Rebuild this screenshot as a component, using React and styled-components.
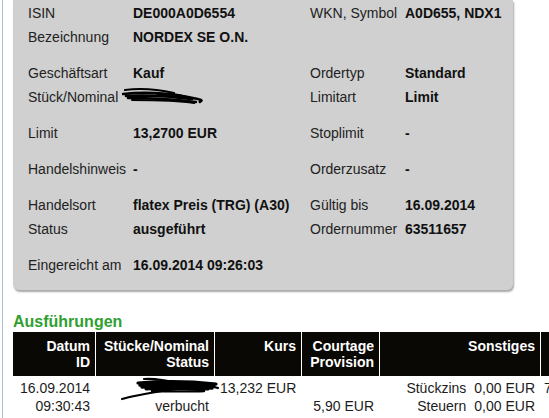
import React from 'react';
import styled, { createGlobalStyle } from 'styled-components';

const GlobalStyle = createGlobalStyle`
  html, body {
    margin: 0;
    padding: 0;
    overflow: hidden;
    background: #fff;
  }
  body {
    font-family: "Liberation Sans", Arial, sans-serif;
    font-size: 14px;
    color: #222;
  }
`;

const Page = styled.div`
  margin-left: 2px;
  border-left: 1px solid #a9c0d2;
  padding-left: 10px;
  min-height: 418px;
  width: 760px;
`;

const Panel = styled.div`
  width: 500px;
  box-sizing: border-box;
  background: #d0d0d0;
  border-radius: 0 0 6px 6px;
  box-shadow: 1px 2px 2px rgba(0, 0, 0, 0.35);
  padding: 1px 0 13px 15px;
  display: flex;
  flex-direction: column;
  gap: 12px;
`;

const Group = styled.div`
  display: flex;
  flex-direction: column;
`;

const DetailRow = styled.div`
  display: grid;
  grid-template-columns: 105px 177px 95px 1fr;
  height: 24px;
  line-height: 24px;
  white-space: nowrap;
`;

const Label = styled.div`
  color: #222;
`;

const Value = styled.div`
  position: relative;
  font-weight: bold;
  color: #111;
`;

const Heading = styled.h2`
  margin: 23px 0 1px;
  font-size: 16px;
  line-height: 18px;
  font-weight: bold;
  color: #30a030;
`;

const Table = styled.div`
  width: 740px;
`;

const TableRow = styled.div`
  display: grid;
  grid-template-columns: 83px 119px 87px 78px 161px 200px;
`;

const HeadCell = styled.div`
  background: #0a0805;
  color: #fff;
  font-weight: bold;
  font-size: 14px;
  line-height: 16px;
  padding: 6px 5px;
  text-align: right;
  border-right: 1px solid #fff;
  white-space: nowrap;
`;

const Cell = styled.div`
  position: relative;
  line-height: 18px;
  padding: 3px 5px 0 ${({ $left }) => ($left ? '3px' : '5px')};
  text-align: ${({ $left }) => ($left ? 'left' : 'right')};
  border-right: 1px solid transparent;
  color: #1c1c1c;
  white-space: nowrap;
`;

const Extras = styled.div`
  display: grid;
  grid-template-columns: auto auto;
  justify-content: end;
  column-gap: 8px;
`;

const Scribble = styled.svg`
  position: absolute;
  pointer-events: none;
`;

const NominalScribble = () => (
  <Scribble width="82" height="20" viewBox="0 0 82 20" style={{ left: -11, top: 2 }}>
    <g fill="none" stroke="#000" strokeLinecap="round">
      <path d="M3 3 C 18 1, 34 2, 52 6" strokeWidth="2.2" />
      <path d="M1 7 C 20 5, 44 6, 66 10 S 76 14, 78 15" strokeWidth="2.6" />
      <path d="M4 9 C 24 8, 46 9, 70 12" strokeWidth="2.6" />
      <path d="M6 11 C 28 11, 50 12, 74 15" strokeWidth="2.4" />
      <path d="M10 13 C 30 13, 54 13, 72 16" strokeWidth="2" />
      <path d="M36 8 C 50 7, 58 8, 66 11" strokeWidth="3" />
    </g>
  </Scribble>
);

const TableScribble = () => (
  <Scribble width="112" height="26" viewBox="0 0 112 26" style={{ left: 12, top: 0 }}>
    <g fill="none" stroke="#000" strokeLinecap="round">
      <path d="M36 3 C 46 2, 52 4, 60 5" strokeWidth="2.2" />
      <path d="M30 7 C 54 5, 80 5, 108 8" strokeWidth="3.2" />
      <path d="M32 9 C 56 7, 82 8, 106 10" strokeWidth="3.4" />
      <path d="M34 11 C 58 10, 84 10, 104 12" strokeWidth="3.4" />
      <path d="M38 13 C 60 12, 82 13, 100 13" strokeWidth="3" />
      <path d="M44 15 C 62 15, 78 16, 96 15" strokeWidth="2.4" />
      <path d="M60 14 C 42 17, 24 20, 14 23" strokeWidth="2.2" />
      <path d="M72 9 C 86 8, 98 8, 110 12" strokeWidth="2.2" />
    </g>
  </Scribble>
);

const details = [
  [
    ['ISIN', 'DE000A0D6554', 'WKN, Symbol', 'A0D655, NDX1'],
    ['Bezeichnung', 'NORDEX SE O.N.'],
  ],
  [
    ['Geschäftsart', 'Kauf', 'Ordertyp', 'Standard'],
    ['Stück/Nominal', <NominalScribble key="s" />, 'Limitart', 'Limit'],
  ],
  [['Limit', '13,2700 EUR', 'Stoplimit', '-']],
  [['Handelshinweis', '-', 'Orderzusatz', '-']],
  [
    ['Handelsort', 'flatex Preis (TRG) (A30)', 'Gültig bis', '16.09.2014'],
    ['Status', 'ausgeführt', 'Ordernummer', '63511657'],
  ],
  [['Eingereicht am', '16.09.2014 09:26:03']],
];

const Lines = ({ children }) =>
  children.map((line, i) => (
    <div key={i}>{line === '' ? '\u00a0' : line}</div>
  ));

export default function App() {
  return (
    <>
      <GlobalStyle />
      <Page>
        <Panel>
          {details.map((group, g) => (
            <Group key={g}>
              {group.map(([l1, v1, l2, v2], r) => (
                <DetailRow key={r}>
                  <Label>{l1}</Label>
                  <Value>{v1}</Value>
                  <Label>{l2}</Label>
                  <Value>{v2}</Value>
                </DetailRow>
              ))}
            </Group>
          ))}
        </Panel>

        <Heading>Ausführungen</Heading>
        <Table>
          <TableRow>
            <HeadCell><Lines>{['Datum', 'ID']}</Lines></HeadCell>
            <HeadCell><Lines>{['Stücke/Nominal', 'Status']}</Lines></HeadCell>
            <HeadCell>Kurs</HeadCell>
            <HeadCell><Lines>{['Courtage', 'Provision']}</Lines></HeadCell>
            <HeadCell>Sonstiges</HeadCell>
            <HeadCell>Endbetrag</HeadCell>
          </TableRow>
          <TableRow>
            <Cell><Lines>{['16.09.2014', '09:30:43']}</Lines></Cell>
            <Cell>
              <TableScribble />
              <Lines>{['', 'verbucht']}</Lines>
            </Cell>
            <Cell><Lines>{['13,232 EUR', '']}</Lines></Cell>
            <Cell><Lines>{['', '5,90 EUR']}</Lines></Cell>
            <Cell>
              <Extras>
                <div>Stückzins</div>
                <div>0,00 EUR</div>
                <div>Steuern</div>
                <div>0,00 EUR</div>
              </Extras>
            </Cell>
            <Cell $left><Lines>{['7.946,38 EUR', '']}</Lines></Cell>
          </TableRow>
        </Table>
      </Page>
    </>
  );
}
